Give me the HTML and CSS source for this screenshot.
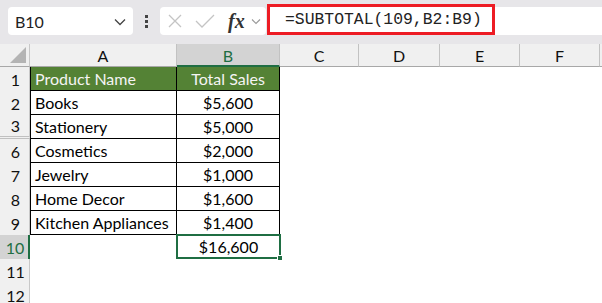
FILE: index.html
```html
<!DOCTYPE html>
<html>
<head>
<meta charset="utf-8">
<link rel="stylesheet" href="styles.css">
</head>
<body>
<div class="toolbar">
  <div class="namebox">
    <span class="name">B10</span>
    <svg class="chev" width="12" height="8" viewBox="0 0 12 8"><path d="M1 1.5 L6 6.5 L11 1.5" fill="none" stroke="#444" stroke-width="1.3"/></svg>
  </div>
  <div class="dots"><i></i><i></i><i></i></div>
  <div class="fxbox">
    <svg width="14" height="14" viewBox="0 0 14 14"><path d="M1 1 L13 13 M13 1 L1 13" stroke="#c4c4c4" stroke-width="1.3" fill="none"/></svg>
    <svg width="20" height="14" viewBox="0 0 20 14"><path d="M1 7 L7 13 L19 1" stroke="#c4c4c4" stroke-width="1.3" fill="none"/></svg>
    <span class="fx">fx</span>
    <svg width="10" height="7" viewBox="0 0 10 7"><path d="M1 1.5 L5 5.5 L9 1.5" fill="none" stroke="#999" stroke-width="1.1"/></svg>
  </div>
  <div class="formula">
    <div class="redbox">=SUBTOTAL(109,B2:B9)</div>
  </div>
</div>
<div class="sheet">
  <div class="corner"><span class="tri"></span></div>
  <div class="ch">A</div>
  <div class="ch sel">B</div>
  <div class="ch">C</div>
  <div class="ch">D</div>
  <div class="ch">E</div>
  <div class="ch">F</div>
  <div class="ch last"></div>

  <div class="rh">1</div>
  <div class="c t hd first top">Product Name</div>
  <div class="c t hd num top">Total Sales</div>
  <div class="e"></div><div class="e"></div><div class="e"></div><div class="e"></div><div class="e"></div>

  <div class="rh">2</div>
  <div class="c t first">Books</div>
  <div class="c t num">$5,600</div>
  <div class="e"></div><div class="e"></div><div class="e"></div><div class="e"></div><div class="e"></div>

  <div class="rh hid">3</div>
  <div class="c t first">Stationery</div>
  <div class="c t num">$5,000</div>
  <div class="e"></div><div class="e"></div><div class="e"></div><div class="e"></div><div class="e"></div>

  <div class="rh">6</div>
  <div class="c t first">Cosmetics</div>
  <div class="c t num">$2,000</div>
  <div class="e"></div><div class="e"></div><div class="e"></div><div class="e"></div><div class="e"></div>

  <div class="rh">7</div>
  <div class="c t first">Jewelry</div>
  <div class="c t num">$1,000</div>
  <div class="e"></div><div class="e"></div><div class="e"></div><div class="e"></div><div class="e"></div>

  <div class="rh">8</div>
  <div class="c t first">Home Decor</div>
  <div class="c t num">$1,600</div>
  <div class="e"></div><div class="e"></div><div class="e"></div><div class="e"></div><div class="e"></div>

  <div class="rh">9</div>
  <div class="c t first">Kitchen Appliances</div>
  <div class="c t num">$1,400</div>
  <div class="e"></div><div class="e"></div><div class="e"></div><div class="e"></div><div class="e"></div>

  <div class="rh sel">10</div>
  <div class="c"></div>
  <div class="c num active">$16,600<span class="handle"></span></div>
  <div class="e"></div><div class="e"></div><div class="e"></div><div class="e"></div><div class="e"></div>

  <div class="rh">11</div>
  <div class="c"></div><div class="c"></div>
  <div class="e"></div><div class="e"></div><div class="e"></div><div class="e"></div><div class="e"></div>

  <div class="rh">12</div>
  <div class="c"></div><div class="c"></div>
  <div class="e"></div><div class="e"></div><div class="e"></div><div class="e"></div><div class="e"></div>
</div>
</body>
</html>
```

FILE: styles.css
```css
* { box-sizing: border-box; }
html, body { margin: 0; padding: 0; background: #fff; overflow: hidden; }
body { width: 602px; height: 303px; font-family: "Lato", "Open Sans", sans-serif; }

.toolbar {
  height: 44px;
  background: #e7e6e9;
  display: flex;
  align-items: flex-start;
  padding-top: 7px;
  padding-left: 8px;
}
.namebox {
  width: 125px;
  height: 28px;
  background: #fff;
  border-radius: 4px;
  display: flex;
  align-items: center;
  justify-content: space-between;
  padding: 0 7px 0 7px;
}
.name { font-size: 16px; color: #222; }
.chev { margin-top: 2px; }
.dots {
  width: 27px;
  height: 28px;
  display: flex;
  flex-direction: column;
  align-items: center;
  justify-content: center;
  gap: 2px;
}
.dots i { display: block; width: 3px; height: 3px; background: #444; }
.fxbox {
  width: 106px;
  height: 28px;
  background: #fff;
  border-radius: 4px;
  display: flex;
  align-items: center;
  padding-left: 8px;
  gap: 12px;
}
.fxbox svg:nth-child(2) { margin-left: 1px; }
.fx {
  font-family: "Liberation Serif", "DejaVu Serif", serif;
  font-style: italic;
  font-weight: bold;
  font-size: 20px;
  color: #333;
  margin-left: 1px;
}
.fxbox svg:last-child { margin-left: -6px; }
.formula {
  flex: 1;
  height: 28px;
  background: #fff;
  margin-left: 1px;
  position: relative;
}
.redbox {
  position: absolute;
  left: 0;
  top: -3px;
  width: 228px;
  height: 31px;
  border: 3px solid #ed1c24;
  font-family: "Liberation Mono", monospace;
  font-size: 16.4px;
  color: #222;
  padding-left: 15px;
  line-height: 25px;
}

.sheet {
  display: grid;
  grid-template-columns: 30px 147px 103px 79px 81px 80px 80px 2px;
  grid-template-rows: 23px repeat(10, 24px);
  font-size: 16px;
}
.corner {
  background: #f0f0f0;
  border-right: 1px solid #c8c8c8;
  border-bottom: 1px solid #a8a8a8;
  position: relative;
}
.tri {
  position: absolute;
  right: 3px;
  bottom: 3px;
  width: 0; height: 0;
  border-left: 16px solid transparent;
  border-bottom: 16px solid #b4b4b4;
}
.ch {
  background: #f0f0f0;
  border-right: 1px solid #c2c2c2;
  border-bottom: 1px solid #a8a8a8;
  display: flex;
  align-items: center;
  justify-content: center;
  color: #111;
  padding-top: 1px;
}
.ch.sel {
  background: #d3d3d3;
  color: #1f6e43;
  border-bottom: 2px solid #1f6e43;
}
.ch.last { border-right: none; }
.rh {
  background: #f0f0f0;
  border-right: 1px solid #c8c8c8;
  display: flex;
  align-items: center;
  justify-content: center;
  color: #111;
  padding-left: 2px;
}
.rh.hid { border-bottom: 3px double #c0c0c0; }
.rh.sel {
  background: #d3d3d3;
  color: #1f6e43;
  border-right: 2px solid #1f6e43;
}
.c {
  display: flex;
  align-items: center;
  padding-left: 4px;
  color: #000;
}
.c.t {
  border-right: 1px solid #000;
  border-bottom: 1px solid #000;
}
.c.first { border-left: 1px solid #000; }
.c.hd { background: #548235; color: #f4f4f4; }
.c.num { justify-content: center; padding-left: 0; }
.active {
  position: relative;
  border: 2px solid #1f6e43;
  margin: -1px -1px 0 -1px;
}
.handle {
  position: absolute;
  right: -4px;
  bottom: -4px;
  width: 6px;
  height: 6px;
  background: #1f6e43;
  border: 1px solid #fff;
}
.e { }
```
